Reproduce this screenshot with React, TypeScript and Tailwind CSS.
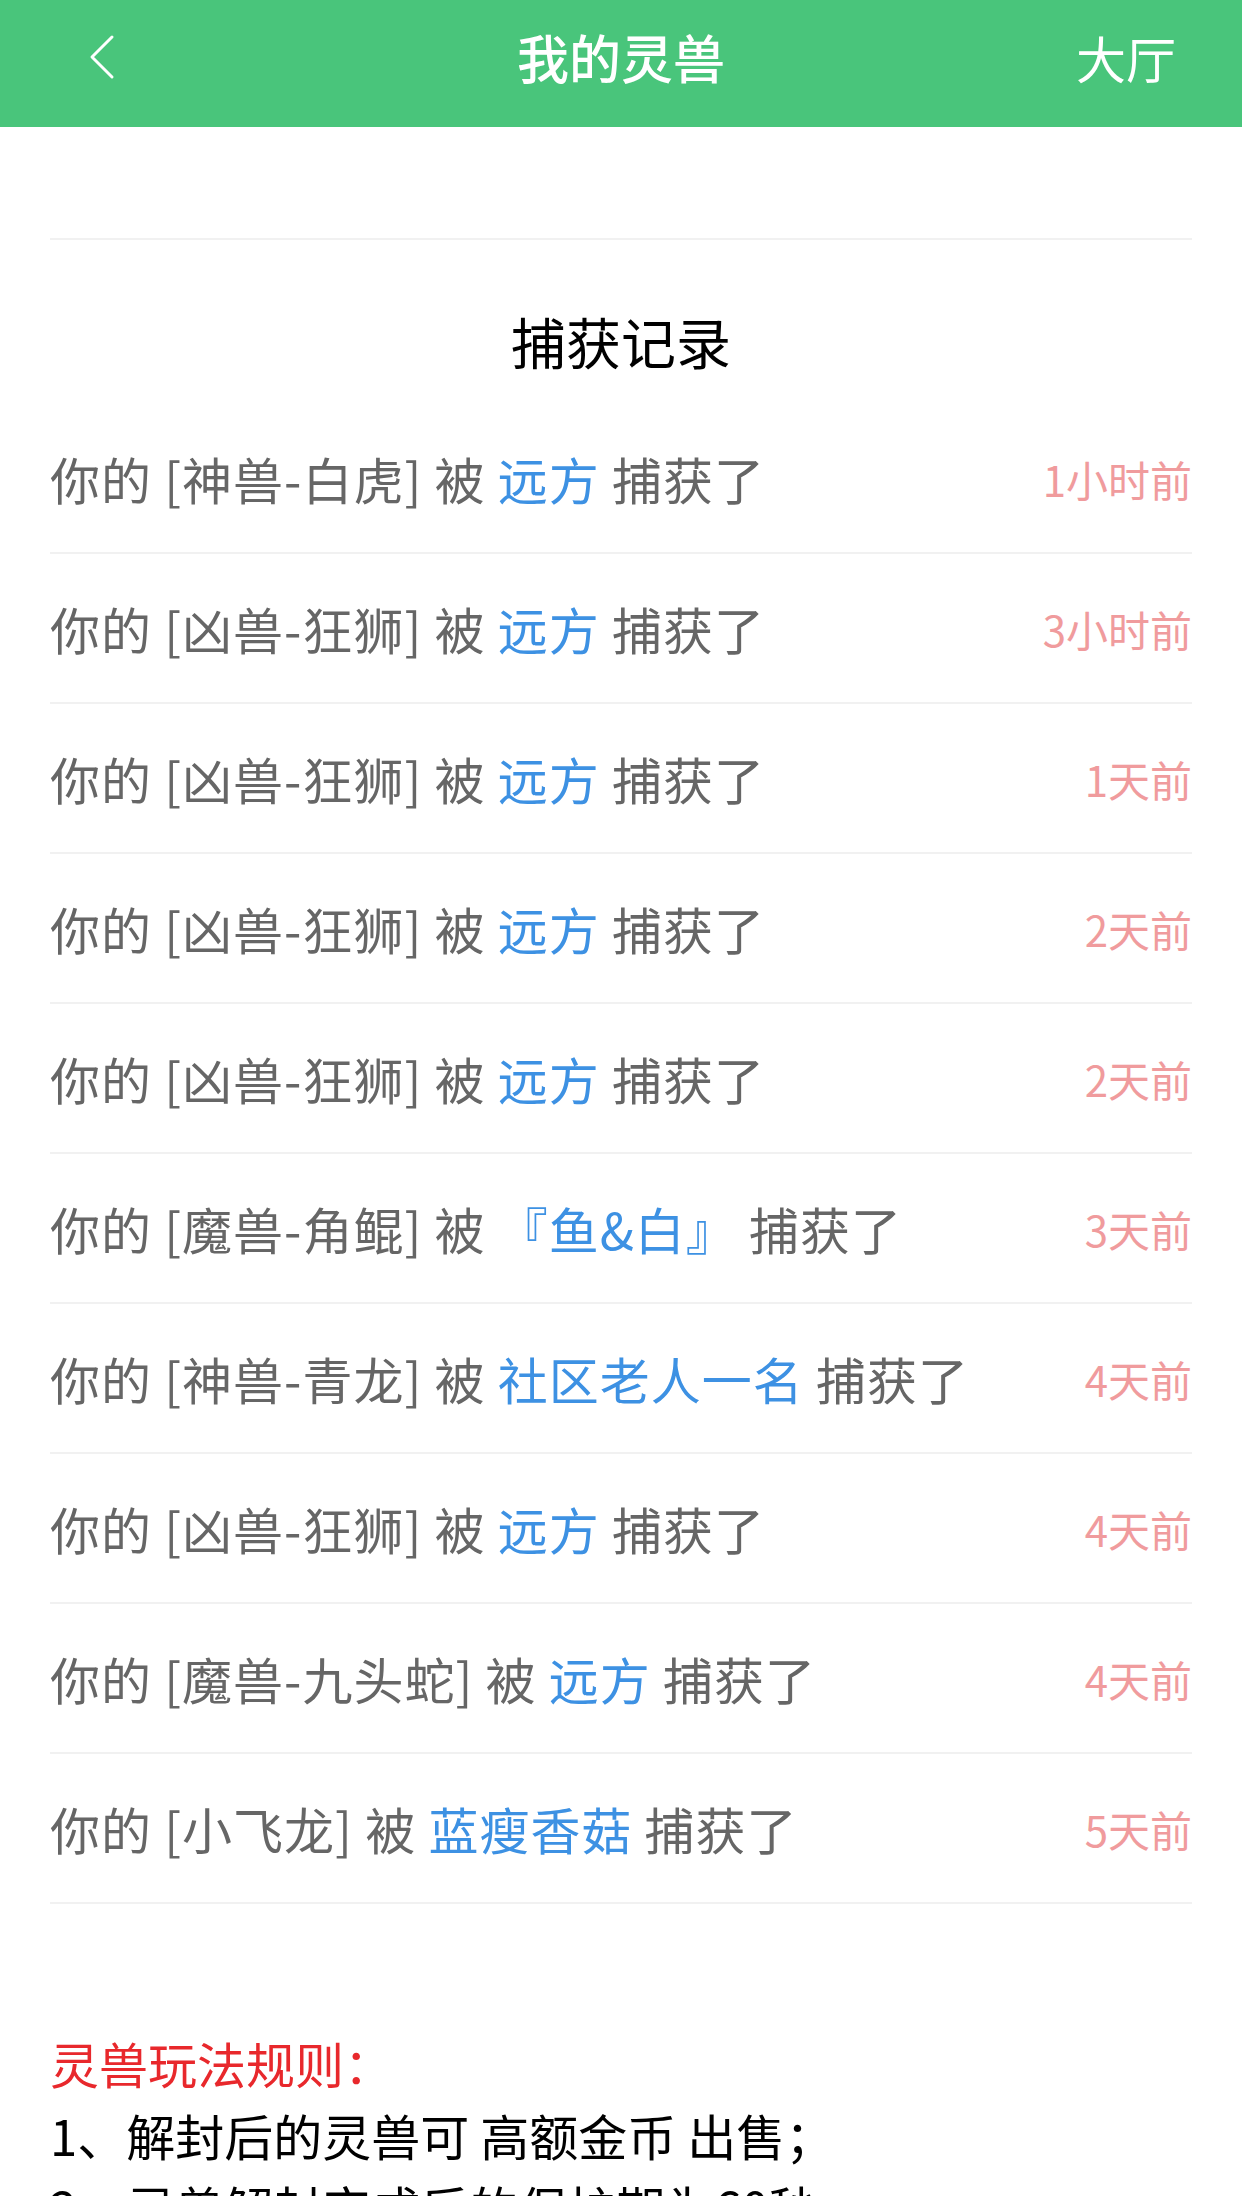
export default function App() {
  const records = [
    { beast: "神兽-白虎", by: "远方", time: "1小时前" },
    { beast: "凶兽-狂狮", by: "远方", time: "3小时前" },
    { beast: "凶兽-狂狮", by: "远方", time: "1天前" },
    { beast: "凶兽-狂狮", by: "远方", time: "2天前" },
    { beast: "凶兽-狂狮", by: "远方", time: "2天前" },
    { beast: "魔兽-角鲲", by: "『鱼&白』", time: "3天前" },
    { beast: "神兽-青龙", by: "社区老人一名", time: "4天前" },
    { beast: "凶兽-狂狮", by: "远方", time: "4天前" },
    { beast: "魔兽-九头蛇", by: "远方", time: "4天前" },
    { beast: "小飞龙", by: "蓝瘦香菇", time: "5天前" },
  ]

  return (
    <div className="min-h-screen bg-white font-['Noto_Sans_CJK_SC','Noto_Sans',sans-serif]">
      {/* Nav bar */}
      <header className="h-[127px] bg-[#49c57b] text-white">
        <div className="h-[114px] px-[50px] grid grid-cols-3 items-center">
          <div className="flex items-center">
            <svg width="40" height="48" viewBox="0 0 40 48" className="ml-[38px]">
              <path d="M24 4 L4 24 L24 44" fill="none" stroke="white" strokeWidth="3" strokeLinecap="round" strokeLinejoin="round" />
            </svg>
          </div>
          <h1 className="text-center text-[52px] font-medium leading-none">我的灵兽</h1>
          <div className="text-right text-[50px] leading-none pr-[16px]">大厅</div>
        </div>
      </header>

      <main className="px-[50px]">
        <div className="mt-[111px] h-[2px] bg-[#f1f1f1]" />

        <h2 className="pt-[60px] pb-[24px] text-center text-[55px] leading-[80px] text-black">捕获记录</h2>

        <ul>
          {records.map((r, i) => (
            <li
              key={i}
              className="h-[150px] border-b-2 border-[#f1f1f1] flex items-center justify-between"
            >
              <p className="text-[50px] tracking-[1px] text-[#666666] whitespace-pre">
                {`你的 [${r.beast}] 被 `}
                <span className="text-[#3d91e3]">{r.by}</span>
                {" 捕获了"}
              </p>
              <span className="text-[42px] text-[#f09b9d]">{r.time}</span>
            </li>
          ))}
        </ul>

        {/* Rules */}
        <section className="pt-[123px] text-[49px] leading-[72px]">
          <p className="text-[#e8282c]">灵兽玩法规则：</p>
          <p className="text-black">1、解封后的灵兽可 高额金币 出售；</p>
          <p className="text-black">2、灵兽解封完成后的保护期为60秒；</p>
        </section>
      </main>
    </div>
  )
}
